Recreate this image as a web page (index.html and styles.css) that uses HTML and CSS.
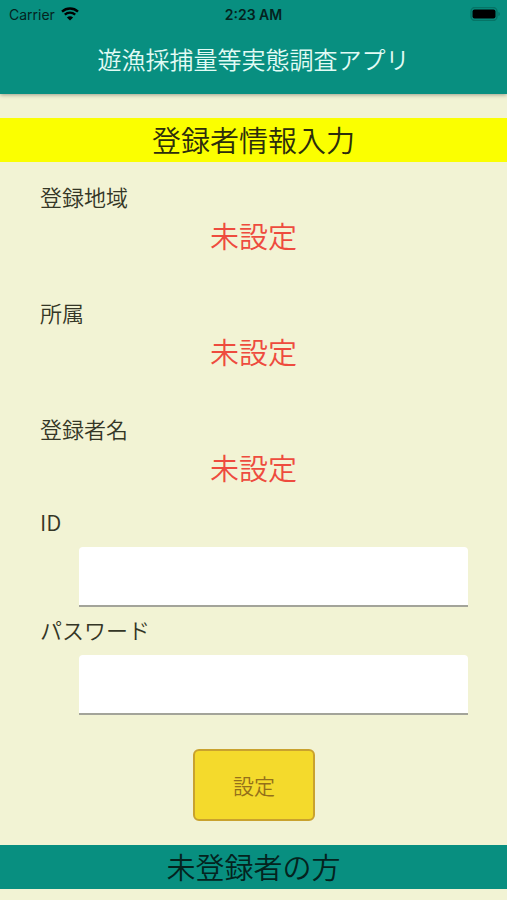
FILE: index.html
```html
<!DOCTYPE html>
<html lang="ja">
<head>
<meta charset="utf-8">
<meta name="viewport" content="width=device-width, initial-scale=1">
<title>遊漁採捕量等実態調査アプリ</title>
<link rel="stylesheet" href="styles.css">
</head>
<body>
<header class="app-header">
  <div class="status-bar">
    <div class="status-left">
      <span>Carrier</span>
      <svg class="wifi" viewBox="0 0 18 14" aria-hidden="true">
        <path d="M1 4.6C5.6.4 12.4.4 17 4.6" fill="none" stroke="#000" stroke-width="2.4"/>
        <path d="M3.8 7.7c3-2.8 7.4-2.8 10.4 0" fill="none" stroke="#000" stroke-width="2.3"/>
        <path d="M9 13.6 5.9 10.4c1.8-1.6 4.4-1.6 6.2 0z"/>
      </svg>
    </div>
    <span class="status-time">2:23 AM</span>
    <div class="status-right">
      <svg class="battery" viewBox="0 0 31 14" aria-hidden="true">
        <rect x="1" y=".5" width="26" height="13" rx="4" fill="none" stroke="#067466" stroke-width="1.5"/>
        <rect x="2.5" y="2.5" width="23" height="9" rx="2"/>
        <path d="M28.3 5v4c2.2-.7 2.2-3.3 0-4z" fill="#067466"/>
      </svg>
    </div>
  </div>
  <h1 class="app-title">遊漁採捕量等実態調査アプリ</h1>
</header>
<main>
  <h2 class="banner banner-yellow">登録者情報入力</h2>
  <dl class="profile">
    <div class="profile-item"><dt class="label">登録地域</dt><dd class="value">未設定</dd></div>
    <div class="profile-item"><dt class="label">所属</dt><dd class="value">未設定</dd></div>
    <div class="profile-item"><dt class="label">登録者名</dt><dd class="value">未設定</dd></div>
  </dl>
  <form class="login">
    <label class="label" for="user-id">ID</label>
    <input class="field" id="user-id" type="text">
    <label class="label" for="password">パスワード</label>
    <input class="field" id="password" type="password">
    <button class="submit" type="button">設定</button>
  </form>
  <h2 class="banner banner-teal">未登録者の方</h2>
</main>
</body>
</html>
```
FILE: styles.css
```css
* {
  box-sizing: border-box;
}

body {
  margin: 0;
  background: #f2f3d4;
  color: #343626;
  font-family: "Noto Sans CJK JP", sans-serif;
  font-weight: 350;
}

.app-header {
  background: #088f80;
  box-shadow: 0 1px 4px rgba(0, 0, 0, 0.35);
}

.status-bar {
  display: grid;
  grid-template-columns: 1fr auto 1fr;
  align-items: center;
  height: 28px;
  padding: 0 6px;
  color: #04231e;
  font-family: Inter, sans-serif;
  font-size: 14px;
  font-weight: 400;
}

.status-left {
  display: flex;
  align-items: center;
  gap: 6px;
  padding-left: 3px;
}

.status-right {
  display: flex;
  justify-content: flex-end;
}

.status-time {
  font-weight: 600;
}

.wifi {
  width: 18px;
  height: 14px;
}

.battery {
  width: 31px;
  height: 14px;
}

.app-title {
  margin: 0;
  padding-bottom: 4px;
  color: #e2fbf5;
  font-size: 24px;
  font-weight: 350;
  line-height: 62px;
  text-align: center;
}

.banner {
  margin: 24px 0;
  padding-bottom: 2px;
  font-size: 29px;
  font-weight: 350;
  line-height: 42px;
  text-align: center;
}

.banner-yellow {
  margin-bottom: 18px;
  background: #fbff00;
  color: #2c2d0c;
}

.banner-teal {
  background: #088f80;
  color: #04231e;
}

.profile {
  display: grid;
  gap: 38px;
  margin: 0 40px;
}

.label {
  font-size: 22px;
  line-height: 32px;
}

.value {
  margin: 0;
  color: #ee4b3e;
  font-size: 29px;
  line-height: 46px;
  text-align: center;
}

.login {
  display: flex;
  flex-direction: column;
  padding: 15px 39px 0 40px;
}

.field {
  height: 60px;
  margin: 10px 0 6px 39px;
  padding: 0 16px;
  border: 0;
  border-bottom: 2px solid #a3a49a;
  border-radius: 4px 4px 0 0;
  background: #fff;
  color: inherit;
  font: inherit;
  font-size: 22px;
}

.submit {
  align-self: center;
  width: 122px;
  height: 72px;
  margin-top: 28px;
  border: 2px solid #c9a22e;
  border-radius: 6px;
  background: #f4da2c;
  color: #94701a;
  font: inherit;
  font-size: 21px;
}
```
